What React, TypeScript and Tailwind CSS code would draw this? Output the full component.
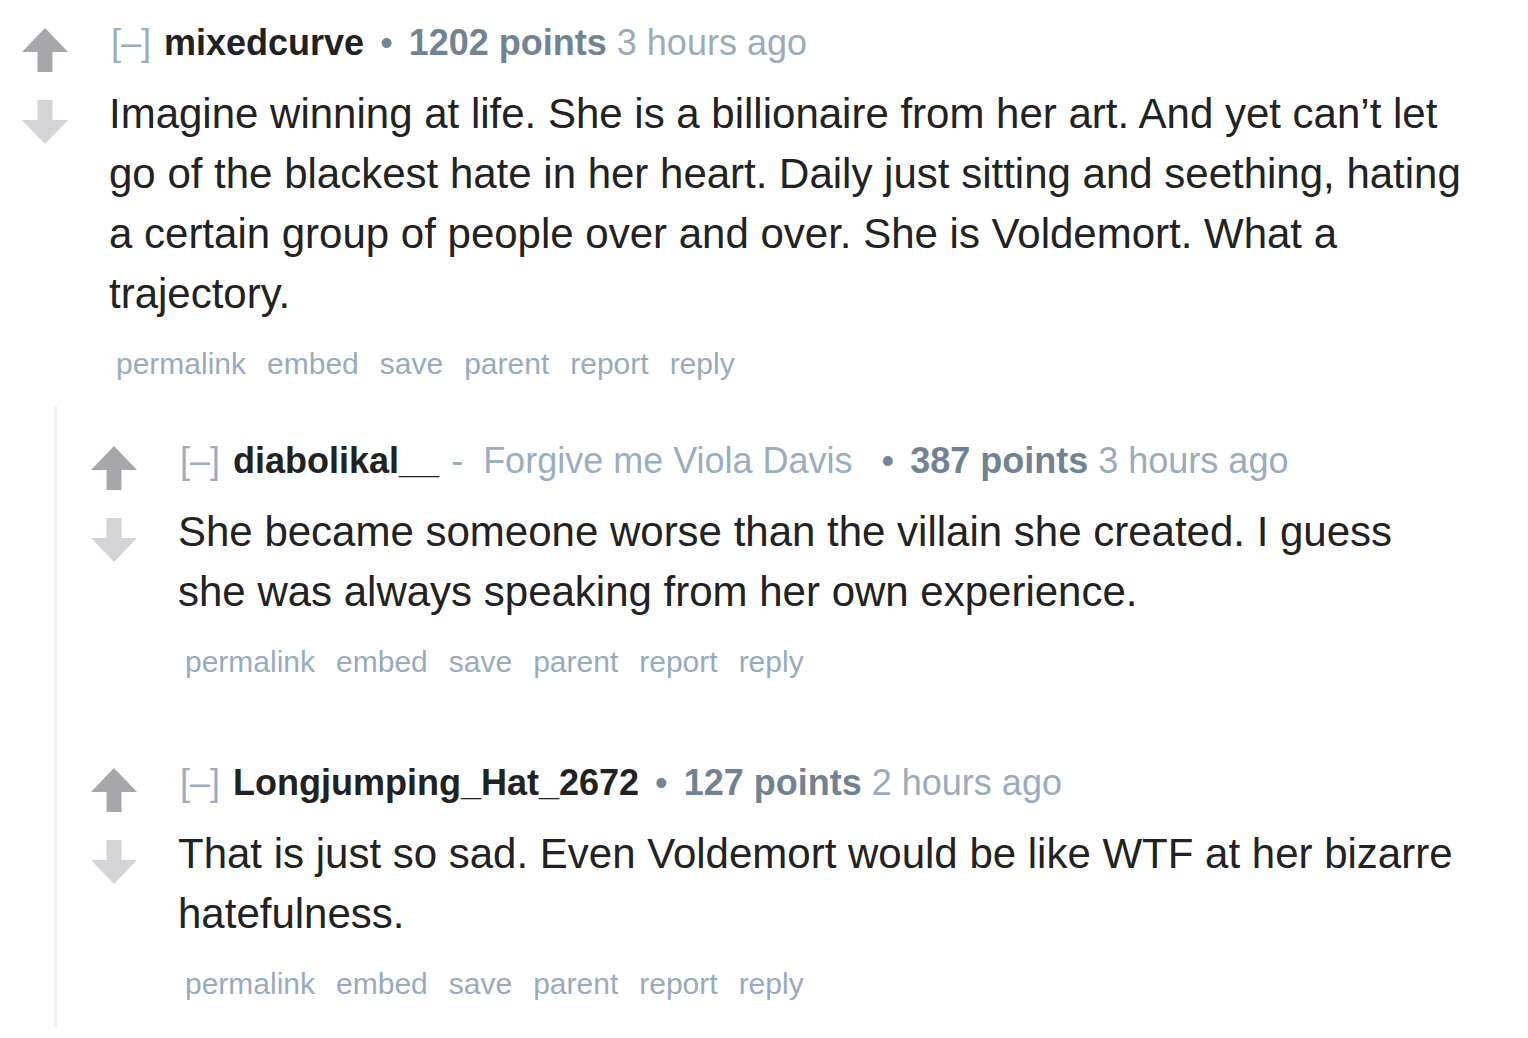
import React from "react";

const Up = () => (
  <svg width="46" height="44" viewBox="0 0 46 44" className="block">
    <path d="M23 0 L46 24 L30.5 24 L30.5 44 L15.5 44 L15.5 24 L0 24 Z" fill="#a6a7ab" />
  </svg>
);
const Down = () => (
  <svg width="46" height="44" viewBox="0 0 46 44" className="block">
    <path d="M23 44 L46 20 L30.5 20 L30.5 0 L15.5 0 L15.5 20 L0 20 Z" fill="#d3d4d8" />
  </svg>
);

type C = {
  user: string;
  flair?: string;
  points: string;
  time: string;
  lines: string[];
};

const links = ["permalink", "embed", "save", "parent", "report", "reply"];

function Comment({ c }: { c: C }) {
  return (
    <div className="flex">
      <div className="w-[46px] shrink-0 flex flex-col gap-[28px] mt-[8px]">
        <Up />
        <Down />
      </div>
      <div className="ml-[41px] flex-1">
        <div className="pl-[2px] text-[36px] leading-[46px] whitespace-nowrap">
          <span className="text-[#9aaebf]">[–]</span>
          <span className="ml-[13px] font-bold text-[#222222]">{c.user}</span>
          {c.flair && (
            <>
              <span className="ml-[12px] text-[#9aaebf]">-</span>
              <span className="ml-[20px] mr-[13px] text-[#9aaebf]">{c.flair}</span>
            </>
          )}
          <span className="mx-[16px] text-[#738596]">•</span>
          <span className="font-bold text-[#718393]">{c.points}</span>
          <span className="ml-[10px] text-[#99abbc]">{c.time}</span>
        </div>
        <div className="mt-[18px] text-[42px] leading-[60px] text-[#222222] whitespace-nowrap">
          {c.lines.map((l, i) => (
            <div key={i}>{l}</div>
          ))}
        </div>
        <div className="mt-[20px] ml-[7px] flex gap-[21px] text-[30px] leading-[40px] text-[#98abbe]">
          {links.map((l) => (
            <span key={l}>{l}</span>
          ))}
        </div>
      </div>
    </div>
  );
}

export default function App() {
  return (
    <div
      className="bg-white w-[1528px] h-[1038px] overflow-hidden"
      style={{ fontFamily: '"Liberation Sans", Arial, sans-serif' }}
    >
      <div className="pt-[20px] pl-[22px]">
        <Comment
          c={{
            user: "mixedcurve",
            points: "1202 points",
            time: "3 hours ago",
            lines: [
              "Imagine winning at life. She is a billionaire from her art. And yet can’t let",
              "go of the blackest hate in her heart. Daily just sitting and seething, hating",
              "a certain group of people over and over. She is Voldemort. What a",
              "trajectory.",
            ],
          }}
        />
        <div className="mt-[22px] ml-[32px] border-l-[3px] border-[#eef0f3] pl-[33px] pt-[32px] pb-[23px]">
          <div className="pl-[1px]">
            <Comment
              c={{
                user: "diabolikal__",
                flair: "Forgive me Viola Davis",
                points: "387 points",
                time: "3 hours ago",
                lines: [
                  "She became someone worse than the villain she created. I guess",
                  "she was always speaking from her own experience.",
                ],
              }}
            />
            <div className="h-[78px]" />
            <Comment
              c={{
                user: "Longjumping_Hat_2672",
                points: "127 points",
                time: "2 hours ago",
                lines: [
                  "That is just so sad. Even Voldemort would be like WTF at her bizarre",
                  "hatefulness.",
                ],
              }}
            />
          </div>
        </div>
      </div>
    </div>
  );
}
